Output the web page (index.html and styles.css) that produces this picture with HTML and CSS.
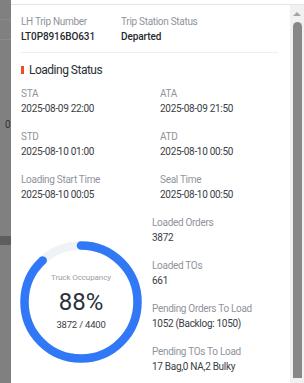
FILE: index.html
```html
<!DOCTYPE html>
<html>
<head>
<meta charset="utf-8">
<link rel="stylesheet" href="styles.css">
</head>
<body>
<div class="backdrop">
  <div class="bd-box"></div>
  <div class="bd-zero">0</div>
  <div class="bd-band"></div>
</div>
<div class="panel">
  <div class="frame">
    <div class="content">
      <div class="header">
        <div class="field hcol">
          <div class="label">LH Trip Number</div>
          <div class="value strong">LT0P8916BO631</div>
        </div>
        <div class="field">
          <div class="label">Trip Station Status</div>
          <div class="value strong">Departed</div>
        </div>
      </div>
      <div class="title"><span class="mark"></span>Loading Status</div>
      <div class="times">
        <div class="field"><div class="label">STA</div><div class="value">2025-08-09 22:00</div></div>
        <div class="field"><div class="label">ATA</div><div class="value">2025-08-09 21:50</div></div>
        <div class="field"><div class="label">STD</div><div class="value">2025-08-10 01:00</div></div>
        <div class="field"><div class="label">ATD</div><div class="value">2025-08-10 00:50</div></div>
        <div class="field"><div class="label">Loading Start Time</div><div class="value">2025-08-10 00:05</div></div>
        <div class="field"><div class="label">Seal Time</div><div class="value">2025-08-10 00:50</div></div>
      </div>
      <div class="bottom">
        <div class="gauge">
          <svg width="122" height="122" viewBox="0 0 122 122">
            <circle cx="61" cy="61" r="56.5" fill="none" stroke="#eff2f7" stroke-width="8.5"/>
            <circle cx="61" cy="61" r="56.5" fill="none" stroke="#3178f6" stroke-width="8.5" stroke-linecap="round" stroke-dasharray="312.4 355" transform="rotate(-90 61 61)"/>
          </svg>
          <div class="gauge-text">
            <div class="g-label">Truck Occupancy</div>
            <div class="g-pct">88%</div>
            <div class="g-sub">3872 / 4400</div>
          </div>
        </div>
        <div class="stack">
          <div class="field"><div class="label">Loaded Orders</div><div class="value">3872</div></div>
          <div class="field"><div class="label">Loaded TOs</div><div class="value">661</div></div>
          <div class="field"><div class="label">Pending Orders To Load</div><div class="value">1052 (Backlog: 1050)</div></div>
          <div class="field"><div class="label">Pending TOs To Load</div><div class="value">17 Bag,0 NA,2 Bulky</div></div>
        </div>
      </div>
    </div>
    <div class="scrollbar">
      <div class="arrow"></div>
      <div class="thumb"></div>
    </div>
  </div>
</div>
</body>
</html>
```
FILE: styles.css
```css
html, body {
  margin: 0;
  padding: 0;
}
body {
  width: 304px;
  height: 383px;
  overflow: hidden;
  display: flex;
  font-family: Roboto, "Liberation Sans", sans-serif;
  background: #7f7f7f;
}
.backdrop {
  width: 11px;
  flex: none;
  background: #808080;
  display: flex;
  flex-direction: column;
  overflow: hidden;
}
.bd-box {
  margin-top: 19px;
  height: 19px;
  border-top: 1px solid #8a8a8a;
  border-bottom: 1px solid #8a8a8a;
}
.bd-zero {
  margin-top: 80px;
  margin-left: 5px;
  font-size: 10px;
  line-height: 10px;
  color: #333;
}
.bd-band {
  margin-top: 106px;
  height: 9px;
  background: #5e5e5e;
}
.panel {
  flex: 1;
  background: #fff;
  padding-top: 4px;
  display: flex;
  flex-direction: column;
  min-width: 0;
}
.frame {
  flex: 1;
  border-top: 1px solid #e3e6ee;
  display: flex;
  min-height: 0;
}
.content {
  flex: 1;
  padding: 9px 12px 0 10px;
  min-width: 0;
}
.header {
  display: flex;
  padding-bottom: 8px;
  border-bottom: 1px solid #eceef2;
}
.hcol {
  width: 100px;
}
.field {
  display: flex;
  flex-direction: column;
}
.label {
  font-size: 10px;
  line-height: 15px;
  color: #8f949c;
  letter-spacing: -0.3px;
  white-space: nowrap;
}
.value {
  font-size: 10px;
  line-height: 15px;
  color: #3a3e45;
  letter-spacing: -0.3px;
  white-space: nowrap;
}
.value.strong {
  font-weight: 500;
  color: #262a30;
  letter-spacing: -0.1px;
}
.title {
  margin-top: 9px;
  display: flex;
  align-items: center;
  font-size: 12px;
  line-height: 16px;
  color: #2b2f36;
  letter-spacing: -0.5px;
}
.mark {
  width: 3px;
  height: 8px;
  background: #ee4d2d;
  margin-right: 5px;
  flex: none;
}
.times {
  margin-top: 8px;
  display: grid;
  grid-template-columns: 139px 1fr;
  row-gap: 13px;
}
.bottom {
  margin-top: 13px;
  display: flex;
}
.gauge {
  width: 131px;
  flex: none;
  display: grid;
  justify-items: start;
  align-items: center;
  align-self: start;
  margin-top: 26px;
}
.gauge svg {
  grid-area: 1 / 1;
  margin-left: -1px;
  display: block;
}
.gauge-text {
  grid-area: 1 / 1;
  width: 120px;
  display: flex;
  flex-direction: column;
  align-items: center;
}
.g-label {
  font-size: 8px;
  line-height: 10px;
  color: #9a9ea6;
  letter-spacing: -0.1px;
}
.g-pct {
  font-size: 24px;
  line-height: 28px;
  color: #2b313b;
  margin-top: 5px;
}
.g-sub {
  font-size: 9.5px;
  line-height: 12px;
  color: #3a3e45;
  margin-top: 3px;
  letter-spacing: -0.2px;
}
.stack {
  display: flex;
  flex-direction: column;
  gap: 13px;
}
.scrollbar {
  width: 14px;
  flex: none;
  background: #f1f1f1;
  display: flex;
  flex-direction: column;
  align-items: center;
}
.arrow {
  margin-top: 7px;
  width: 0;
  height: 0;
  border-left: 4px solid transparent;
  border-right: 4px solid transparent;
  border-bottom: 4px solid #a3a3a3;
}
.thumb {
  margin-top: 6px;
  width: 9px;
  flex: 1;
  margin-bottom: 5px;
  background: #888;
  border-radius: 5px 5px 0 0;
}
```
